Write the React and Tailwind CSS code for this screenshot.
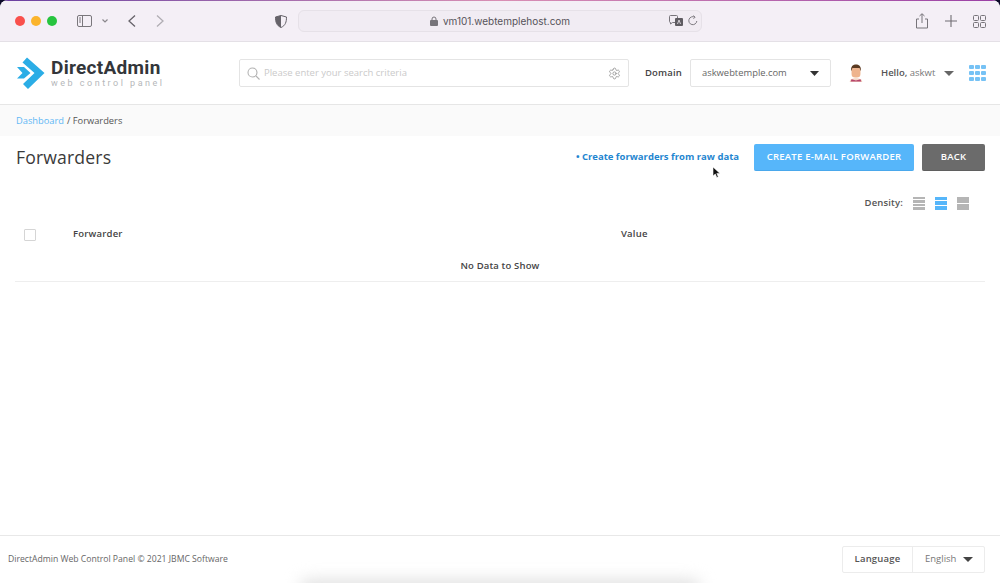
import React from "react";
import { Settings } from "lucide-react";

const Logo = () => (
  <svg width="30" height="34" viewBox="0 0 30 34" className="shrink-0">
    <path d="M11 1.500 L28.500 17 L12 33 L7 28 L18.500 17 L6.500 6.500 Z" fill="#2bade6" />
    <path d="M1 11 L8 11 L14.500 17 L8 22.500 L1 22.500 L6.500 17 Z" fill="#2bade6" />
  </svg>
);

const Caret = ({ w = 10, h = 6, c = "#444" }) => (
  <svg width={w} height={h} viewBox="0 0 10 6" preserveAspectRatio="none" className="shrink-0"><path d="M0 0H10L5 6Z" fill={c} /></svg>
);

const Density = ({ rows, c }) => (
  <div className="flex flex-col gap-px w-[12px] h-[13px]">
    {Array.from({ length: rows }).map((_, i) => (
      <div key={i} className="flex-1" style={{ background: c }} />
    ))}
  </div>
);

const Avatar = () => (
  <svg width="16" height="20" viewBox="0 0 18 20">
    <path d="M2 20c0-3 3-4 7-4s7 1 7 4Z" fill="#f3d5c5" />
    <path d="M4 17l5 1.500 5-1.500 1 2.500H3Z" fill="#b5436b" />
    <rect x="4" y="3" width="10" height="12" rx="4" fill="#eeb48e" />
    <path d="M3.500 8C3 2 6 .5 9 .5S15 2 14.500 8L13 4.500H5Z" fill="#5b3a21" />
  </svg>
);

export default function App() {
  return (
    <div className="relative w-[1000px] h-[583px] overflow-hidden bg-[#0d0b2a] font-['Open_Sans',sans-serif]">
      <div className="flex flex-col h-full rounded-t-lg overflow-hidden bg-white">
        <div className="h-px bg-gradient-to-r from-[#6a3fa0] via-[#d98fb4] to-[#9a3fa5]" />
        <div className="h-[41px] shrink-0 bg-[#f4eff6] border-b border-[#e4e0e6] flex items-center font-['Inter',sans-serif]">
          <div className="flex items-center gap-[6px] ml-[15px]">
            <div className="w-[10px] h-[10px] rounded-full bg-[#f9504c]" />
            <div className="w-[10px] h-[10px] rounded-full bg-[#fbb42c]" />
            <div className="w-[10px] h-[10px] rounded-full bg-[#27c43f]" />
          </div>
          <svg width="15" height="12" viewBox="0 0 15 12" className="ml-[20px]" fill="none" stroke="#7a777c" strokeWidth="1">
            <rect x=".5" y=".5" width="14" height="11" rx="1.500" />
            <path d="M5.500 .5v11" />
            <path d="M2 3h2M2 5h2M2 7h2" />
          </svg>
          <svg width="6" height="4" viewBox="0 0 6 4" className="ml-[10px]" fill="none" stroke="#8a878c" strokeWidth="1.200"><path d="M.5 .5 3 3 5.500 .5" /></svg>
          <svg width="8" height="12" viewBox="0 0 8 12" className="ml-[20px]" fill="none" stroke="#66636a" strokeWidth="1.300"><path d="M7 .5 1 6l6 5.500" /></svg>
          <svg width="8" height="12" viewBox="0 0 8 12" className="ml-[20px]" fill="none" stroke="#b0adb3" strokeWidth="1.300"><path d="M1 .5 7 6l-6 5.500" /></svg>
          <svg width="12" height="13" viewBox="0 0 12 13" className="ml-[111px]">
            <path d="M6 .5 11.500 2c0 5-1 8.500-5.500 10.500C1.500 10.500.5 7 .5 2Z" fill="#f4eff6" stroke="#66636a" />
            <path d="M6 .5V12.500C1.500 10.500.5 7 .5 2Z" fill="#66636a" />
          </svg>
          <div className="relative ml-[11px] w-[404px] h-[22px] rounded-md bg-[#f1ecf3] border border-[#e6e1e8] flex items-center justify-center">
            <svg width="8" height="10" viewBox="0 0 8 10" className="mr-[5px]"><path d="M2 4V3a2 2 0 0 1 4 0v1" fill="none" stroke="#77747a" /><rect y="4" width="8" height="6" rx="1" fill="#77747a" /></svg>
            <span className="text-[10px] leading-none text-[#56535a]">vm101.webtemplehost.com</span>
            <div className="absolute right-[3px] top-[4px] flex items-center gap-[5px]">
              <svg width="14" height="11" viewBox="0 0 14 11">
                <path d="M1.500 .5h6a1 1 0 0 1 1 1v5a1 1 0 0 1-1 1h-4l-2 1.500V7.500a1 1 0 0 1-1-1v-5a1 1 0 0 1 1-1Z" fill="none" stroke="#77747a" />
                <rect x="6" y="3" width="8" height="8" rx="1" fill="#5f5c62" />
                <path d="M8.500 9 10 5l1.500 4" fill="none" stroke="#f1ecf3" strokeWidth=".8" />
              </svg>
              <svg width="10" height="11" viewBox="0 0 10 11" fill="none" stroke="#7d7a80"><path d="M8.800 6a4 4 0 1 1-2-3.800" /><path d="M5.500 .5 7 2.200 5.500 3.800" /></svg>
            </div>
          </div>
          <svg width="14" height="16" viewBox="0 0 14 16" className="ml-[213px]" fill="none" stroke="#77747a"><path d="M4 6H1.500v9h11V6H10" /><path d="M7 10V1M4.500 3 7 .7 9.500 3" /></svg>
          <svg width="12" height="12" viewBox="0 0 12 12" className="ml-[16px]" fill="none" stroke="#6f6c72" strokeWidth="1.100"><path d="M6 0v12M0 6h12" /></svg>
          <svg width="13" height="13" viewBox="0 0 13 13" className="ml-[16px]" fill="none" stroke="#77747a"><rect x=".5" y=".5" width="5" height="5" rx="1" /><rect x="7.500" y=".5" width="5" height="5" rx="1" /><rect x=".5" y="7.500" width="5" height="5" rx="1" /><rect x="7.500" y="7.500" width="5" height="5" rx="1" /></svg>
        </div>

        <header className="h-[63px] shrink-0 bg-white border-b border-[#e6e6e6] flex items-center">
          <div className="ml-[16px] flex items-center w-[144px]">
            <Logo />
            <div className="ml-[5px] flex flex-col gap-[1px] font-['Roboto',sans-serif] whitespace-nowrap">
              <span className="text-[19px] leading-[18px] font-bold tracking-[0.3px] text-[#33363a]">DirectAdmin</span>
              <span className="text-[9px] leading-[10px] tracking-[2.5px] text-[#b5b7ba]">web control panel</span>
            </div>
          </div>
          <div className="ml-[79px] w-[390px] h-[28px] border border-[#e4e4e4] rounded-[2px] flex items-center pl-[7px] pr-[7px]">
            <svg width="13" height="13" viewBox="0 0 13 13" fill="none" stroke="#b3b3b3" strokeWidth="1.100"><circle cx="5.500" cy="5.500" r="4.500" /><path d="M9 9l3.500 3.500" /></svg>
            <span className="ml-[4px] flex-1 text-[9.5px] text-[#cacaca]">Please enter your search criteria</span>
            <Settings size={13} strokeWidth={1.500} color="#8f8f8f" />
          </div>
          <span className="ml-[16px] w-[45px] text-[9.5px] font-semibold tracking-[0.15px] text-[#444]">Domain</span>
          <div className="w-[141px] h-[28px] border border-[#e4e4e4] rounded-[2px] flex items-center justify-between pl-[11px] pr-[11px]">
            <span className="text-[9.4px] text-[#666] whitespace-nowrap">askwebtemple.com</span>
            <Caret w={9} h={5} c="#333" />
          </div>
          <div className="ml-[17px] flex"><Avatar /></div>
          <span className="ml-[17px] w-[63px] text-[9.5px] text-[#777] whitespace-nowrap"><b className="font-semibold text-[#555]">Hello,</b> askwt</span>
          <Caret w={10} h={5} c="#666" />
          <div className="ml-[15px] grid grid-cols-3 gap-[1.500px]">
            {Array.from({ length: 9 }).map((_, i) => (
              <div key={i} className="w-[4.500px] h-[4.500px] rounded-[1px] bg-[#76c2f5]" />
            ))}
          </div>
        </header>

        <div className="h-[31px] shrink-0 bg-[#fafafa] flex items-center pl-[16px] text-[9.3px]">
          <span className="text-[#5fb8f5]">Dashboard</span>
          <span className="text-[#555] ml-[3px]">/ Forwarders</span>
        </div>

        <main className="flex-1 bg-white px-[15px] flex flex-col">
          <div className="flex items-center h-[43px] pl-[1px]">
            <h1 className="text-[17.6px] text-[#3a3a3a] tracking-[0.15px]">Forwarders</h1>
            <span className="ml-auto text-[9.5px] font-bold text-[#1f86d0]">• Create forwarders from raw data</span>
            <button className="ml-[15px] w-[160px] h-[27px] rounded-[2px] bg-[#56b6fa] border-b border-[#4aa8ec] text-white text-[9.5px] font-semibold tracking-[0.25px]">CREATE E-MAIL FORWARDER</button>
            <button className="ml-[8px] w-[63px] h-[27px] rounded-[2px] bg-[#6b6b6b] border-b border-[#5f5f5f] text-white text-[9.5px] font-semibold tracking-[0.25px]">BACK</button>
          </div>
          <div className="flex items-center justify-end h-[16px] mt-[16px] pr-[16px]">
            <span className="text-[9.5px] font-semibold tracking-[0.15px] text-[#555]">Density:</span>
            <div className="ml-[10px]"><Density rows={4} c="#b5b5b5" /></div>
            <div className="ml-[10px]"><Density rows={3} c="#56b6fa" /></div>
            <div className="ml-[10px]"><Density rows={2} c="#b5b5b5" /></div>
          </div>
          <div className="flex items-center h-[37px] mt-[5px] text-[9.5px] font-semibold tracking-[0.2px] text-[#444]">
            <div className="w-[58px] pl-[9px]">
              <div className="w-[12px] h-[12px] border border-[#d5d5d5] rounded-[1px]" />
            </div>
            <span className="w-[548px]">Forwarder</span>
            <span>Value</span>
          </div>
          <div className="flex items-center justify-center h-[29px] pb-[2px] text-[9.5px] font-semibold tracking-[0.15px] text-[#444] border-b border-[#eeeeee]">No Data to Show</div>
        </main>

        <footer className="relative h-[48px] shrink-0 bg-white border-t border-[#e8e8e8] flex items-center pl-[8px] pr-[15px]">
          <span className="text-[8.65px] text-[#666]">DirectAdmin Web Control Panel © 2021 JBMC Software</span>
          <div className="ml-auto flex h-[27px] w-[143px] border border-[#ececec] rounded-[2px] text-[9.5px]">
            <div className="w-[70px] border-r border-[#ececec] flex items-center justify-center font-semibold tracking-[0.2px] text-[#555]">Language</div>
            <div className="flex-1 flex items-center pl-[12px] text-[#777]">English<span className="ml-[7px] flex"><Caret w={10} h={5} c="#444" /></span></div>
          </div>
          <div className="absolute left-[300px] top-[44px] w-[400px] h-[16px] rounded-[8px] bg-[#dedede] blur-[8px]" />
        </footer>
      </div>
      <svg width="12" height="14" viewBox="0 0 12 14" className="absolute left-[712px] top-[166px]">
        <path d="M1 1v9l2.300-2 1.500 3.500 1.500-.7L4.800 7.400H8Z" fill="#111" stroke="#fff" strokeWidth=".6" />
      </svg>
    </div>
  );
}
